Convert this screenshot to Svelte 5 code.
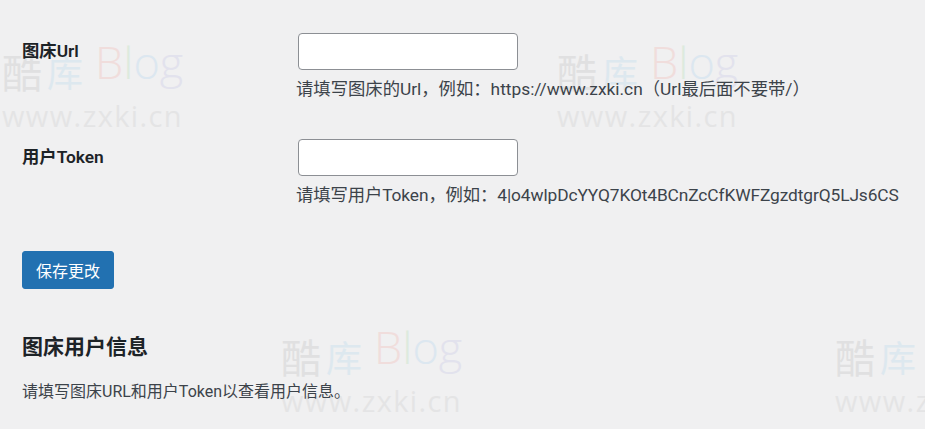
<script>
  const fields = [
    { label: '图床Url', hint: '请填写图床的Url，例如：https://www.zxki.cn（Url最后面不要带/）' },
    { label: '用户Token', hint: '请填写用户Token，例如：4|o4wlpDcYYQ7KOt4BCnZcCfKWFZgzdtgrQ5LJs6CS', tight: true }
  ];

  // watermark is tiled over the page background
  const marks = [
    { x: 2, y: 42 },
    { x: 557, y: 42 },
    { x: 281, y: 327 },
    { x: 835, y: 327 }
  ];
</script>

<div class="page">
  <div class="marks" aria-hidden="true">
    {#each marks as m}
      <div class="mark" style="left: {m.x}px; top: {m.y}px">
        <div class="mark__top">
          <span class="mark__ku1">酷</span><span class="mark__ku2">库</span>
          <span class="mark__blog"><i class="b">B</i><i class="l">l</i><i class="o">o</i><i class="g">g</i></span>
        </div>
        <div class="mark__url">www.zxki.cn</div>
      </div>
    {/each}
  </div>

  <div class="form">
    {#each fields as f}
      <div class="row">
        <div class="row__label">{f.label}</div>
        <div class="row__field">
          <input class="input" type="text" />
          <p class="hint" class:hint--tight={f.tight}>{f.hint}</p>
        </div>
      </div>
    {/each}
  </div>

  <button class="save" type="button">保存更改</button>

  <h2 class="title">图床用户信息</h2>
  <p class="info">请填写图床URL和用户Token以查看用户信息。</p>
</div>

<style>
  :global(body) {
    background: #f0f0f1;
  }

  .page {
    position: relative;
    height: 429px;
    box-sizing: border-box;
    padding: 33px 0 0 22px;
    overflow: hidden;
    font-family: Roboto, "Noto Sans CJK SC", sans-serif;
    color: #2c3338;
  }

  .marks {
    position: absolute;
    inset: 0;
    pointer-events: none;
  }

  .mark {
    position: absolute;
    width: 200px;
    opacity: 0.55;
  }

  .mark__top {
    display: flex;
    align-items: flex-start;
    height: 58px;
    font-family: "Noto Sans CJK SC", sans-serif;
    font-size: 40px;
    line-height: 58px;
  }

  .mark__ku1 {
    color: #d4d4d4;
  }

  .mark__ku2 {
    margin-left: 5px;
    font-size: 36px;
    color: #cfe3ef;
  }

  .mark__blog {
    margin: -9px 0 0 12px;
    font-family: "Open Sans", sans-serif;
    font-size: 45px;
    font-weight: 300;
  }

  .mark__blog i {
    font-style: normal;
  }

  .b { color: #f0cfcb; }
  .l { color: #cfe6cf; }
  .o { color: #cde0f0; }
  .g { color: #d7d7ea; }

  .mark__url {
    font-family: "Open Sans", sans-serif;
    font-size: 29px;
    line-height: 32px;
    letter-spacing: 1.4px;
    color: #dcdcdc;
  }

  .form,
  .save,
  .title,
  .info {
    position: relative;
  }

  .form {
    display: flex;
    flex-direction: column;
    gap: 38px;
  }

  .row {
    display: flex;
  }

  .row__label {
    width: 276px;
    flex: none;
    padding-top: 6px;
    font-size: 17.33px;
    line-height: 24px;
    font-weight: 600;
    color: #1d2327;
  }

  .input {
    display: block;
    box-sizing: border-box;
    width: 220px;
    height: 37px;
    margin: 0;
    padding: 0 8px;
    background: #fff;
    border: 1px solid #8c8f94;
    border-radius: 4px;
  }

  .hint {
    margin: 7px 0 0 -2px;
    font-size: 17.33px;
    line-height: 24px;
    white-space: nowrap;
    color: #3c434a;
  }

  .hint--tight {
    letter-spacing: -0.1px;
  }

  .save {
    display: block;
    width: 92px;
    height: 38px;
    margin: 44px 0 0;
    padding: 0;
    background: #2271b1;
    border: 1px solid #2271b1;
    border-radius: 3px;
    font-family: inherit;
    font-size: 16px;
    color: #fff;
  }

  .title {
    margin: 43px 0 0;
    font-size: 21px;
    line-height: 30px;
    font-weight: 700;
    color: #1d2327;
  }

  .info {
    margin: 18px 0 0;
    font-size: 16px;
    line-height: 24px;
    color: #3c434a;
  }
</style>
